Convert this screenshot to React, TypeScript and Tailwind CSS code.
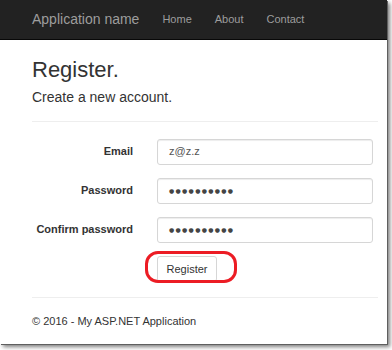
import React from 'react';

const navLinks = ['Home', 'About', 'Contact'];

const fields: { label: string; value: string; secret?: boolean }[] = [
  { label: 'Email', value: 'z@z.z' },
  { label: 'Password', value: 'abcdefghij', secret: true },
  { label: 'Confirm password', value: 'abcdefghij', secret: true },
];

const Field: React.FC<{ value: string; secret?: boolean }> = ({ value, secret }) => (
  <div className="h-[26px] w-[216px] flex items-center pl-[11px] border border-[#d6d6d6] rounded-[3px] bg-white shadow-[inset_0_1px_1px_rgba(0,0,0,0.075)] text-[11px] text-[#555]">
    {secret ? (
      <span className="font-['DejaVu_Sans',sans-serif] text-[6px] tracking-[1.3px] text-[#444] leading-none">
        {'●'.repeat(value.length)}
      </span>
    ) : (
      <span>{value}</span>
    )}
  </div>
);

export default function App() {
  return (
    <div className="w-[392px] h-[350px] bg-white overflow-hidden font-['Liberation_Sans',Arial,sans-serif] text-[#333]">
      <div className="w-[387px] h-[344px] bg-white flex flex-col shadow-[1px_1px_0_#5f5f5f,3px_3px_4px_rgba(0,0,0,0.5)]">
        {/* Navbar */}
        <nav className="h-10 shrink-0 bg-[#222] border-b border-[#080808] flex items-center pl-8">
          <span className="text-[14px] text-[#9d9d9d]">Application name</span>
          <ul className="flex gap-[23px] ml-[23px] text-[11px] text-[#9d9d9d]">
            {navLinks.map((l) => (
              <li key={l}>{l}</li>
            ))}
          </ul>
        </nav>

        <main className="pl-8 pr-[9px]">
          <h2 className="mt-[18px] text-[22px] leading-[1.1]">Register.</h2>
          <h4 className="mt-2 text-[14px] leading-[1.1]">Create a new account.</h4>
          <hr className="mt-[15px] border-t border-[#eee]" />

          <div className="mt-[17px] grid grid-cols-[101px_216px] gap-x-[24px] gap-y-[13px]">
            {fields.map((f) => (
              <React.Fragment key={f.label}>
                <label className="h-[26px] flex items-center justify-end text-[11px] font-bold text-[#333]">
                  {f.label}
                </label>
                <Field value={f.value} secret={f.secret} />
              </React.Fragment>
            ))}
            <div className="col-start-2 relative w-[60px] h-[26px]">
              <button className="w-[60px] h-[26px] border border-[#d6d6d6] rounded-[3px] bg-white text-[11px] text-[#333]">
                Register
              </button>
              {/* red highlight drawn over the button */}
              <div className="absolute left-[-12px] top-[-5px] w-[92px] h-[32px] border-[3px] border-[#ec1c24] rounded-[13px] pointer-events-none" />
            </div>
          </div>

          <hr className="mt-[15px] border-t border-[#eee]" />
          <footer className="mt-[15px] text-[11px] leading-4">© 2016 - My ASP.NET Application</footer>
        </main>
      </div>
    </div>
  );
}
